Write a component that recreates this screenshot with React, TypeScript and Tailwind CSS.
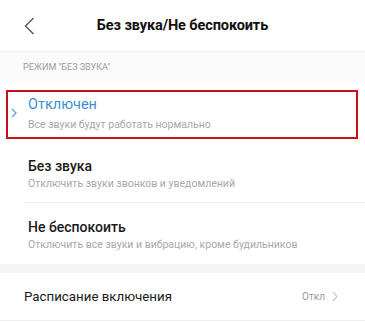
import React from "react";

const items = [
  { title: "Отключен", sub: "Все звуки будут работать нормально", active: true },
  { title: "Без звука", sub: "Отключить звуки звонков и уведомлений", active: false },
  { title: "Не беспокоить", sub: "Отключить все звуки и вибрацию, кроме будильников", active: false },
];

export default function App() {
  return (
    <div className="w-[365px] h-[322px] overflow-hidden bg-white" style={{ fontFamily: "Roboto, 'Noto Sans', sans-serif" }}>
      {/* Header */}
      <div className="relative flex items-center justify-center h-[52px] pt-[1px] border-b border-[#f0f0f0]">
        <svg className="absolute left-[24px] top-[17px]" width="11" height="18" viewBox="0 0 11 18" fill="none">
          <path d="M9.5 1 L1.5 9 L9.5 17" stroke="#555" strokeWidth="1.4" />
        </svg>
        <span className="text-[14.5px] font-bold text-[#111] tracking-[-0.1px]">Без звука/Не беспокоить</span>
      </div>

      {/* Section label */}
      <div className="h-[32px] bg-[#fbfbfb] flex items-center pl-[23px]">
        <span className="text-[9px] text-[#9a9a9a] uppercase">Режим "Без звука"</span>
      </div>

      {/* Options */}
      <div className="flex flex-col">
        {items.map((it, i) => (
          <div
            key={it.title}
            className={`relative flex flex-col pl-[28px] ${i === 0 ? "h-[58px] pt-[11px]" : "h-[61px] pt-[15px]"}`}
          >
            {it.active && (
              <>
                <div className="absolute left-[6px] right-[7px] top-[6px] bottom-[3px] border-[2.5px] border-[#c8101a]" />
                <svg className="absolute left-[11px] top-[24px]" width="6" height="10" viewBox="0 0 6 10" fill="none">
                  <path d="M1 1 L5 5 L1 9" stroke="#5aa0d8" strokeWidth="1.3" />
                </svg>
              </>
            )}
            <span className={`leading-[19px] ${it.active ? "text-[14.5px] text-[#3d8fd1]" : "text-[14px] text-[#1a1a1a] font-medium"}`}>
              {it.title}
            </span>
            <span className={`text-[10.5px] leading-[14px] text-[#a8a8a8] ${i === 0 ? "mt-[4px]" : "mt-[1px]"}`}>{it.sub}</span>
            {i === 1 && <div className="absolute left-[25px] right-0 bottom-0 border-b border-[#ececec]" />}
          </div>
        ))}
      </div>

      {/* Gap */}
      <div className="h-[9px] bg-[#f5f5f5]" />

      {/* Schedule */}
      <div className="flex items-center justify-between h-[48px] pl-[24px] pr-[27px] border-b border-[#f0f0f0]">
        <span className="text-[13.3px] text-[#1a1a1a]">Расписание включения</span>
        <div className="flex items-center gap-[7px]">
          <span className="text-[10px] text-[#9a9a9a]">Откл</span>
          <svg width="6" height="11" viewBox="0 0 6 11" fill="none">
            <path d="M1 1 L5 5.5 L1 10" stroke="#c8c8c8" strokeWidth="1.2" />
          </svg>
        </div>
      </div>
    </div>
  );
}
